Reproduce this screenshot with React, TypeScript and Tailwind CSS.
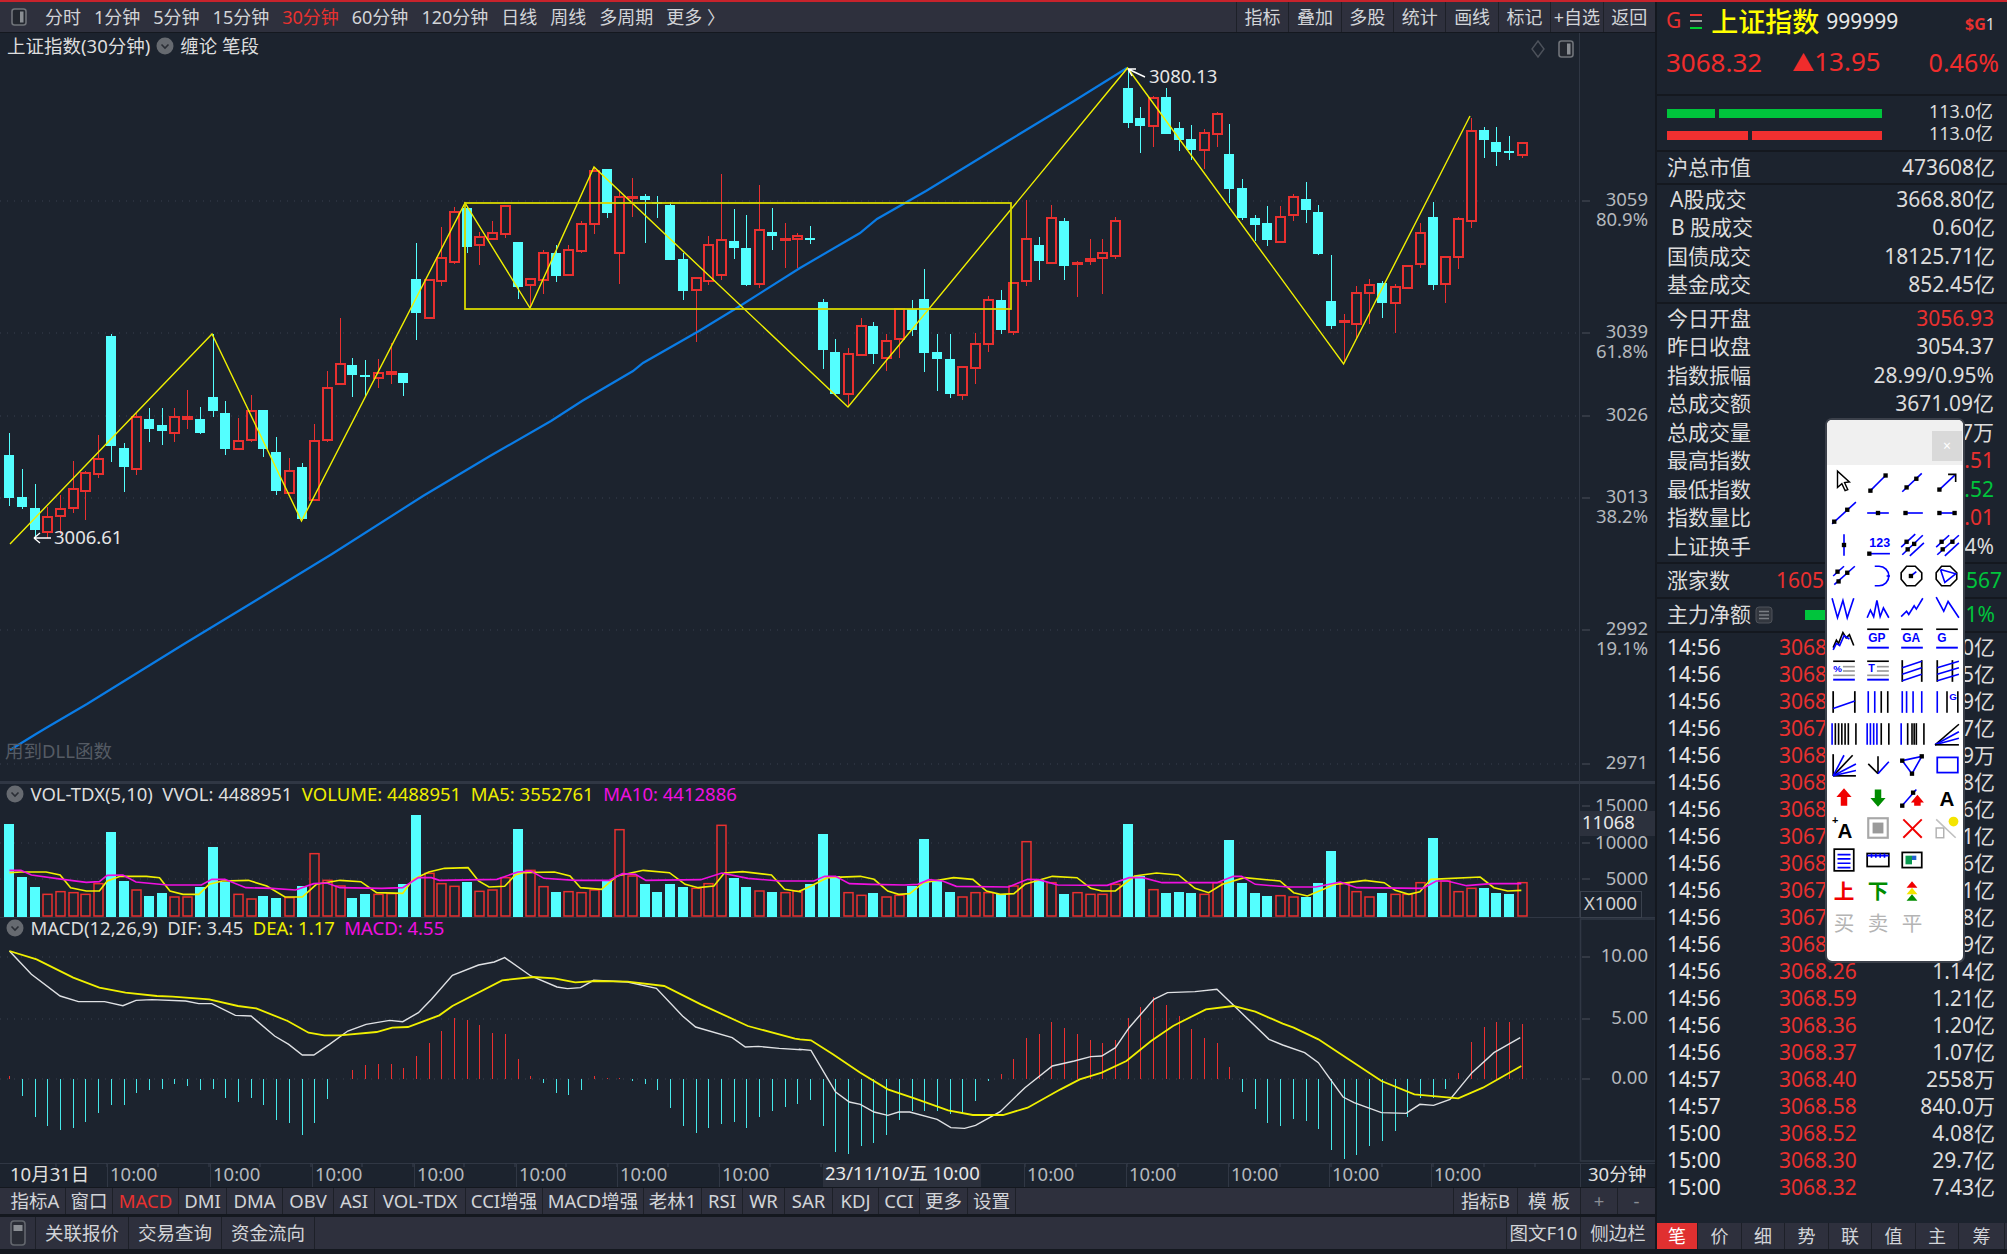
import type { ReactNode } from "react";

const CYAN = "#54ffff";
const RED = "#e9302f";
const YELLOW = "#f0f000";
const MAGENTA = "#f010e0";
const BG = "#1c232e";
const GRID = "#39414e";
const LINE = "#303744";
const AXIS = "#b4b8bd";

const barX = (i: number) => 9.2 + 12.71 * i;

// c = falling (filled), r = rising (hollow): wick top, body top, body bottom, wick bottom
const CANDLES: [string, number, number, number, number][] = [
  ["c", 432, 454, 497, 505], ["c", 468, 496, 506, 508], ["c", 483, 507, 529, 535], ["r", 506, 516, 531, 537],
  ["r", 494, 508, 515, 533], ["r", 460, 488, 507, 512], ["r", 470, 472, 490, 519], ["r", 434, 458, 473, 477],
  ["c", 333, 335, 445, 461], ["c", 442, 447, 466, 491], ["r", 412, 416, 468, 474], ["c", 407, 418, 428, 441],
  ["c", 407, 424, 430, 444], ["r", 407, 416, 432, 441], ["r", 389, 416, 418, 428], ["c", 406, 418, 432, 433],
  ["c", 333, 396, 410, 416], ["c", 400, 412, 448, 454], ["r", 417, 440, 448, 448], ["r", 394, 410, 439, 441],
  ["c", 409, 409, 448, 456], ["c", 436, 451, 490, 494], ["r", 457, 470, 492, 492], ["c", 462, 466, 518, 518],
  ["r", 423, 440, 499, 499], ["r", 370, 387, 439, 441], ["r", 317, 363, 383, 383], ["c", 357, 364, 374, 396],
  ["c", 359, 374, 376, 396], ["r", 358, 372, 377, 387], ["r", 342, 371, 373, 383], ["c", 372, 372, 382, 395],
  ["c", 242, 278, 312, 339], ["r", 279, 279, 317, 317], ["r", 226, 257, 280, 285], ["r", 206, 211, 261, 263],
  ["c", 206, 207, 246, 252], ["r", 231, 236, 244, 264], ["r", 220, 232, 238, 238], ["r", 204, 205, 233, 237],
  ["c", 241, 241, 286, 298], ["r", 278, 278, 284, 306], ["r", 249, 252, 279, 293], ["c", 244, 252, 275, 281],
  ["r", 244, 249, 274, 274], ["r", 220, 223, 250, 252], ["r", 166, 170, 223, 233], ["c", 168, 168, 212, 217],
  ["r", 190, 196, 252, 283], ["r", 177, 196, 197, 216], ["c", 193, 195, 199, 242], ["c", 195, 201, 203, 217],
  ["c", 201, 204, 259, 259], ["c", 252, 258, 290, 299], ["r", 277, 277, 289, 341], ["r", 235, 244, 280, 284],
  ["r", 173, 239, 274, 279], ["c", 208, 240, 247, 258], ["c", 214, 247, 284, 285], ["r", 184, 229, 283, 287],
  ["c", 207, 231, 235, 249], ["r", 222, 238, 239, 267], ["r", 232, 235, 238, 267], ["c", 225, 237, 239, 243],
  ["c", 298, 301, 349, 368], ["c", 338, 351, 393, 395], ["r", 347, 353, 393, 405], ["r", 317, 325, 354, 354],
  ["c", 321, 325, 353, 363], ["r", 333, 340, 357, 370], ["r", 308, 308, 338, 357], ["c", 299, 308, 329, 335],
  ["c", 268, 298, 352, 371], ["c", 333, 351, 358, 390], ["c", 333, 358, 393, 397], ["r", 365, 366, 394, 399],
  ["r", 332, 343, 367, 383], ["r", 295, 299, 343, 351], ["c", 289, 299, 329, 333], ["r", 282, 282, 331, 334],
  ["r", 199, 238, 280, 285], ["c", 236, 244, 260, 279], ["r", 204, 217, 262, 262], ["c", 217, 220, 265, 279],
  ["r", 260, 262, 263, 296], ["r", 238, 258, 260, 264], ["r", 238, 252, 257, 293], ["r", 216, 220, 255, 258],
  ["c", 67, 87, 122, 127], ["c", 106, 117, 125, 152], ["r", 95, 97, 125, 146], ["c", 87, 96, 133, 133],
  ["c", 121, 127, 139, 150], ["c", 124, 138, 149, 159], ["r", 128, 132, 149, 168], ["r", 111, 113, 133, 146],
  ["c", 123, 153, 188, 202], ["c", 178, 187, 217, 219], ["c", 214, 217, 224, 240], ["c", 205, 222, 239, 245],
  ["r", 205, 216, 241, 241], ["r", 193, 196, 214, 220], ["c", 181, 198, 209, 222], ["c", 204, 211, 253, 254],
  ["c", 254, 300, 325, 328], ["r", 313, 320, 321, 362], ["r", 285, 292, 323, 337], ["r", 278, 284, 292, 323],
  ["c", 280, 282, 302, 317], ["r", 283, 286, 302, 332], ["r", 265, 265, 287, 287], ["r", 222, 232, 263, 267],
  ["c", 201, 216, 284, 289], ["r", 255, 256, 283, 302], ["r", 216, 218, 256, 268], ["r", 117, 130, 220, 227],
  ["c", 126, 129, 139, 157], ["c", 126, 141, 151, 165], ["c", 135, 150, 152, 159], ["r", 141, 142, 154, 157],
];

const VOL_TOPS = [
  160, 317, 349, 370, 362, 365, 370, 338, 182, 330, 357, 375, 366, 378, 378, 348, 227, 333, 370, 384,
  375, 380, 380, 344, 248, 328, 345, 380, 370, 370, 368, 340, 133, 307, 338, 346, 332, 361, 357, 320,
  173, 298, 347, 362, 362, 365, 357, 327, 176, 315, 339, 362, 340, 348, 352, 338, 163, 321, 348, 360,
  362, 365, 360, 340, 190, 315, 365, 373, 366, 378, 373, 345, 205, 330, 362, 378, 365, 365, 370, 345,
  212, 328, 335, 370, 365, 370, 370, 340, 160, 315, 356, 366, 362, 366, 370, 335, 208, 335, 366, 375,
  374, 378, 378, 335, 240, 338, 362, 378, 366, 370, 370, 335, 200, 330, 362, 352, 352, 366, 370, 335,
];

const MACD_ENDS = [
  915, 975, 1037, 1065, 1078, 1070, 1052, 1025, 1002, 1002, 967, 957, 953, 940, 945, 957, 953, 980, 993, 980,
  1002, 1047, 1056, 1092, 1056, 985, 925, 897, 882, 880, 880, 892, 855, 816, 780, 740, 748, 762, 785, 790,
  865, 915, 935, 967, 972, 957, 915, 922, 922, 930, 940, 957, 1012, 1065, 1087, 1072, 1060, 1052, 1072, 1038,
  1020, 1007, 998, 988, 1065, 1142, 1150, 1125, 1115, 1092, 1047, 1020, 1020, 1020, 1030, 1030, 990, 930, 910, 865,
  802, 790, 753, 772, 790, 807, 817, 807, 740, 708, 678, 703, 735, 775, 802, 816, 888, 962, 1015, 1055,
  1065, 1045, 1050, 1075, 1138, 1163, 1152, 1125, 1110, 1080, 1038, 980, 980, 953, 905, 812, 767, 753, 753, 758,
];

const ZIGZAG = "10,543 212,333 301.5,520 465,202 530,307 594,166 848,406 1127.5,67 1343.6,363 1470,115";
const BLUE_LINE =
  "10,749 36,733 46,727 87,703 184,643 255,600 332,553 423,495 490,455 551,420 582,400 633,370 643,362 699,330 740,305 800,267 860,232 877,218 926,190 1008,140 1074,100 1127,67";

// traced from the crops: left half uses 1.912 px/unit, right half starts at x=800 with 1.823
const left = (pts: number[][]) => pts.map(([x, y]) => `${x / 1.912},${770 + y / 3}`).join(" ");
const right = (pts: number[][]) => pts.map(([x, y]) => `${800 + x / 1.823},${770 + y / 3}`).join(" ");

const MA5 =
  left([[18,305],[40,303],[88,303],[115,312],[135,350],[165,360],[190,360],[205,330],[230,316],[280,316],[305,320],[325,360],[350,370],[380,370],[400,340],[425,330],[475,328],[510,345],[545,378],[578,378],[605,340],[650,328],[690,332],[720,365],[770,367],[790,325],[820,303],[850,292],[895,290],[915,330],[935,348],[965,346],[985,312],[1000,305],[1060,303],[1090,315],[1110,350],[1150,355],[1180,315],[1230,298],[1280,305],[1310,340],[1335,350],[1365,345],[1385,306],[1420,302],[1475,312],[1500,355],[1530,362]]) +
  " " +
  right([[0,360],[20,345],[50,320],[110,316],[135,325],[160,360],[180,370],[200,368],[225,335],[280,320],[315,325],[340,360],[365,370],[390,368],[410,340],[460,316],[505,320],[530,352],[550,360],[575,360],[610,315],[650,306],[690,312],[720,352],[745,365],[770,340],[810,320],[875,330],[900,365],[925,375],[950,358],[975,340],[1030,328],[1065,335],[1085,358],[1110,370],[1130,362],[1150,325],[1240,318],[1265,350],[1290,360],[1315,358]]);

const MA10 =
  left([[18,298],[40,298],[60,312],[120,325],[165,334],[190,332],[205,313],[235,312],[260,333],[320,342],[385,342],[405,325],[430,325],[470,350],[520,352],[565,357],[600,338],[625,336],[650,350],[730,352],[770,350],[800,320],[825,320],[840,328],[950,325],[990,303],[1015,300],[1040,322],[1100,328],[1165,328],[1190,308],[1215,310],[1235,328],[1340,326],[1380,306],[1430,322],[1490,330],[1530,330]]) +
  " " +
  right([[0,330],[25,330],[45,316],[65,316],[90,338],[130,340],[190,342],[215,340],[235,326],[260,330],[285,346],[380,348],[415,325],[435,326],[470,342],[560,343],[600,320],[625,320],[660,335],[760,335],[790,316],[805,316],[830,340],[890,348],[940,348],[985,333],[1015,350],[1135,352],[1160,330],[1180,330],[1215,344],[1260,338],[1315,338]]);

const DIF =
  left([[18,540],[60,610],[115,675],[150,692],[200,692],[235,704],[260,688],[290,686],[355,690],[380,698],[405,698],[450,733],[480,735],[525,795],[552,820],[578,852],[600,852],[630,820],[665,780],[700,760],[745,748],[770,752],[800,725],[825,685],[865,613],[915,582],[945,573],[965,560],[1015,615],[1065,648],[1085,653],[1110,650],[1135,628],[1200,633],[1255,652],[1305,735],[1330,768],[1400,800],[1425,828],[1450,826],[1490,832],[1530,836]]) +
  " " +
  right([[0,835],[20,838],[65,963],[90,993],[110,1000],[135,1023],[160,1033],[180,1023],[200,1023],[250,1045],[275,1070],[300,1072],[320,1063],[365,1022],[410,950],[460,885],[500,870],[530,857],[550,855],[575,830],[600,770],[645,685],[670,665],[720,662],[760,655],[855,805],[880,822],[920,845],[945,875],[990,978],[1010,995],[1060,1025],[1105,1027],[1130,1000],[1155,1003],[1185,985],[1225,905],[1265,845],[1313,800]]);

const DEA =
  left([[18,540],[70,565],[140,620],[190,650],[240,665],[300,675],[330,677],[400,685],[455,705],[490,712],[550,750],[590,785],[620,793],[650,793],[720,783],[750,770],[780,768],[840,733],[865,705],[960,628],[1020,618],[1060,622],[1100,634],[1140,630],[1200,632],[1270,645],[1340,700],[1430,765],[1520,803]]) +
  " " +
  right([[0,805],[20,808],[60,850],[110,905],[160,955],[210,983],[270,1018],[315,1032],[370,1032],[415,1010],[475,955],[510,925],[550,905],[595,870],[640,810],[680,765],[740,715],[790,705],[830,722],[880,758],[900,770],[945,805],[1000,865],[1060,930],[1120,970],[1200,982],[1245,950],[1315,885]]);

const PERIODS = ["分时", "1分钟", "5分钟", "15分钟", "30分钟", "60分钟", "120分钟", "日线", "周线", "多周期", "更多 〉"];
const TOOLS = ["指标", "叠加", "多股", "统计", "画线", "标记", "+自选", "返回"];

const TABS = [
  { label: "指标A", w: "w-[61px]" }, { label: "窗口", w: "w-[47px]" }, { label: "MACD", w: "w-[66px]", active: true },
  { label: "DMI", w: "w-[48px]" }, { label: "DMA", w: "w-[56px]" }, { label: "OBV", w: "w-[51px]" },
  { label: "ASI", w: "w-[41px]" }, { label: "VOL-TDX", w: "w-[91px]" }, { label: "CCI增强", w: "w-[77px]" },
  { label: "MACD增强", w: "w-[101px]" }, { label: "老林1", w: "w-[58px]" }, { label: "RSI", w: "w-[41px]" },
  { label: "WR", w: "w-[42px]" }, { label: "SAR", w: "w-[48px]" }, { label: "KDJ", w: "w-[46px]" },
  { label: "CCI", w: "w-[41px]" }, { label: "更多", w: "w-[48px]" }, { label: "设置", w: "w-[48px]" },
];

const TICKS: [string, string, string][] = [
  ["14:56", "3068.12", "1.10亿"], ["14:56", "3068.20", "1.25亿"], ["14:56", "3068.05", "1.19亿"], ["14:56", "3067.96", "1.07亿"],
  ["14:56", "3068.01", "9609万"], ["14:56", "3068.15", "1.18亿"], ["14:56", "3068.09", "1.16亿"], ["14:56", "3067.98", "1.21亿"],
  ["14:56", "3068.03", "1.06亿"], ["14:56", "3067.95", "1.11亿"], ["14:56", "3067.99", "1.08亿"], ["14:56", "3068.10", "1.09亿"],
  ["14:56", "3068.26", "1.14亿"], ["14:56", "3068.59", "1.21亿"], ["14:56", "3068.36", "1.20亿"], ["14:56", "3068.37", "1.07亿"],
  ["14:57", "3068.40", "2558万"], ["14:57", "3068.58", "840.0万"], ["15:00", "3068.52", "4.08亿"], ["15:00", "3068.30", "29.7亿"],
  ["15:00", "3068.32", "7.43亿"],
];

const BOTTOM_TABS = [
  { label: "笔", w: "w-[41px]" }, { label: "价", w: "w-[44px]" }, { label: "细", w: "w-[43px]" }, { label: "势", w: "w-[44px]" },
  { label: "联", w: "w-[43px]" }, { label: "值", w: "w-[44px]" }, { label: "主", w: "w-[43px]" }, { label: "筹", w: "w-[46px]" },
];

function CircleCaret() {
  return (
    <svg width="18" height="18" viewBox="0 0 18 18" className="shrink-0">
      <circle cx="9" cy="9" r="8.5" fill="#666a70" />
      <path d="M5.5 7.5 L9 11 L12.5 7.5" fill="none" stroke="#2a2e35" strokeWidth="1.6" />
    </svg>
  );
}

function PanelToggle() {
  return (
    <svg width="16" height="18" viewBox="0 0 16 18">
      <rect x="1" y="1" width="14" height="16" rx="2.5" fill="#23272f" stroke="#70747a" strokeWidth="1.6" />
      <rect x="9" y="3.5" width="3.5" height="11" fill="#8a8e93" />
    </svg>
  );
}

function GridDots({ ys }: { ys: number[] }) {
  return (
    <>
      {ys.map((y) => (
        <line key={y} x1="0" x2="1578" y1={y} y2={y} stroke={GRID} strokeDasharray="1 6" />
      ))}
    </>
  );
}

function AxisTick({ y }: { y: number }) {
  return <line x1="1582" x2="1590" y1={y} y2={y} stroke="#4a505a" />;
}

function AxisLabel({ y, children }: { y: number; children: ReactNode }) {
  return (
    <text x="1648" y={y - 1.5} textAnchor="end" dominantBaseline="central" fill={AXIS} fontSize="18.5">
      {children}
    </text>
  );
}

function Candles() {
  return (
    <g shapeRendering="crispEdges">
      {CANDLES.map(([kind, wickTop, bodyTop, bodyBottom, wickBottom], i) => {
        const x = Math.round(barX(i));
        if (kind === "c") {
          return (
            <g key={i}>
              <line x1={x + 0.5} x2={x + 0.5} y1={wickTop} y2={wickBottom} stroke={CYAN} />
              <rect x={x - 5} y={bodyTop} width="10" height={bodyBottom - bodyTop} fill={CYAN} />
            </g>
          );
        }
        return (
          <g key={i}>
            <line x1={x + 0.5} x2={x + 0.5} y1={wickTop} y2={bodyTop} stroke={RED} />
            <line x1={x + 0.5} x2={x + 0.5} y1={bodyBottom} y2={wickBottom} stroke={RED} />
            <rect x={x - 4} y={bodyTop} width="9" height={bodyBottom - bodyTop} fill={BG} stroke={RED} strokeWidth="2" />
          </g>
        );
      })}
    </g>
  );
}

function MainChart() {
  return (
    <div className="relative h-[748px]">
      <svg width="1656" height="748" viewBox="0 32 1656 748" className="block">
        <GridDots ys={[200, 332, 415, 497, 629, 763]} />
        <line x1="1579.5" x2="1579.5" y1="32" y2="780" stroke={LINE} />
        <Candles />
        <polyline points={BLUE_LINE} fill="none" stroke="#0a7ce6" strokeWidth="2.2" />
        <polyline points={ZIGZAG} fill="none" stroke={YELLOW} strokeWidth="1.4" />
        <rect x="465" y="202" width="546" height="106" fill="none" stroke="#d8d800" strokeWidth="1.8" />
        <path d="M1145 76 L1128 68 M1128 68 L1136 68 M1128 68 L1132 75" fill="none" stroke="#fff" strokeWidth="1.4" />
        <text x="1149" y="74" dominantBaseline="central" fill="#e6e6e6" fontSize="18.5">3080.13</text>
        <path d="M51 537 L34 537 M34 537 L40 532 M34 537 L40 542" fill="none" stroke="#fff" strokeWidth="1.4" />
        <text x="54" y="535" dominantBaseline="central" fill="#e6e6e6" fontSize="18.5">3006.61</text>
        <text x="5" y="749" dominantBaseline="central" fill="#555b64" fontSize="18.5">用到DLL函数</text>

        <path d="M1538 40 L1544 48 L1538 56 L1532 48 Z" fill="none" stroke="#4d525b" strokeWidth="1.4" />

        {[200, 332, 415, 497, 629, 763].map((y) => (
          <AxisTick key={y} y={y} />
        ))}
        <AxisLabel y={199}>3059</AxisLabel>
        <AxisLabel y={219}>80.9%</AxisLabel>
        <AxisLabel y={331}>3039</AxisLabel>
        <AxisLabel y={351}>61.8%</AxisLabel>
        <AxisLabel y={414}>3026</AxisLabel>
        <AxisLabel y={496}>3013</AxisLabel>
        <AxisLabel y={516}>38.2%</AxisLabel>
        <AxisLabel y={628}>2992</AxisLabel>
        <AxisLabel y={648}>19.1%</AxisLabel>
        <AxisLabel y={762}>2971</AxisLabel>
      </svg>

      <div className="absolute left-[7px] top-[2px] flex items-center gap-[6px] text-[18.5px] leading-[22px] text-[#dedede]">
        <span>上证指数(30分钟)</span>
        <CircleCaret />
        <span>缠论 笔段</span>
      </div>
      <div className="absolute left-[1558px] top-[7px]">
        <PanelToggle />
      </div>
    </div>
  );
}

function VolumeChart() {
  return (
    <div className="relative h-[137px] border-t-[3px] border-[#303744]">
      <svg width="1656" height="134" viewBox="0 783 1656 134" className="block">
        <GridDots ys={[842, 878]} />
        <line x1="1579.5" x2="1579.5" y1="783" y2="917" stroke={LINE} />
        {VOL_TOPS.map((top, i) => {
          const x = Math.round(barX(i));
          const y = 770 + top / 3;
          return CANDLES[i][0] === "c" ? (
            <rect key={i} x={x - 5} y={y} width="10" height={916 - y} fill={CYAN} shapeRendering="crispEdges" />
          ) : (
            <rect key={i} x={x - 4} y={y} width="9" height={915 - y} fill={BG} stroke={RED} strokeWidth="1.5" />
          );
        })}
        <polyline points={MA5} fill="none" stroke={YELLOW} strokeWidth="1.6" />
        <polyline points={MA10} fill="none" stroke={MAGENTA} strokeWidth="1.6" />
        <line x1="0" x2="1656" y1="916.5" y2="916.5" stroke={LINE} />
        <AxisTick y={805} />
        <AxisTick y={842} />
        <AxisTick y={878} />
        <AxisLabel y={805}>15000</AxisLabel>
        <AxisLabel y={842}>10000</AxisLabel>
        <AxisLabel y={878}>5000</AxisLabel>
        <rect x="1580" y="810" width="75" height="25" fill="#2c313d" />
        <text x="1582" y="820.5" dominantBaseline="central" fill="#e8e8e8" fontSize="18.5">11068</text>
        <rect x="1580.5" y="890.5" width="61" height="26" fill={BG} stroke="#3a414d" />
        <text x="1584" y="901.5" dominantBaseline="central" fill="#d0d0d0" fontSize="18.5">X1000</text>
      </svg>
      <div className="absolute left-[6px] top-0 flex items-center gap-[9.5px] text-[18.5px] leading-[20px] text-[#dedede] whitespace-nowrap">
        <CircleCaret />
        <span className="-ml-[3px]">VOL-TDX(5,10)</span>
        <span>VVOL: 4488951</span>
        <span className="text-[#eeee00]">VOLUME: 4488951</span>
        <span className="text-[#eeee00]">MA5: 3552761</span>
        <span className="text-[#f010e0]">MA10: 4412886</span>
      </div>
    </div>
  );
}

function MacdChart() {
  return (
    <div className="relative h-[245px]">
      <svg width="1656" height="245" viewBox="0 917 1656 245" className="block">
        <GridDots ys={[956, 1018, 1078]} />
        <g shapeRendering="crispEdges">
          {MACD_ENDS.map((end, i) => {
            const y = 770 + end / 3;
            const x = Math.round(barX(i)) + 0.5;
            return <line key={i} x1={x} x2={x} y1="1078" y2={y} stroke={y < 1078 ? RED : "#45e8ea"} />;
          })}
        </g>
        <polyline points={DIF} fill="none" stroke="#dfe1e4" strokeWidth="1.4" />
        <polyline points={DEA} fill="none" stroke={YELLOW} strokeWidth="1.8" />
        <rect x="1580.5" y="918" width="75" height="242" fill="none" stroke={LINE} strokeWidth="1.6" />
        <AxisTick y={956} />
        <AxisTick y={1018} />
        <AxisTick y={1078} />
        <AxisLabel y={955}>10.00</AxisLabel>
        <AxisLabel y={1017}>5.00</AxisLabel>
        <AxisLabel y={1077}>0.00</AxisLabel>
      </svg>
      <div className="absolute left-[6px] top-0 flex items-center gap-[9.5px] text-[18.5px] leading-[20px] text-[#dedede] whitespace-nowrap">
        <CircleCaret />
        <span className="-ml-[3px]">MACD(12,26,9)</span>
        <span>DIF: 3.45</span>
        <span className="text-[#eeee00]">DEA: 1.17</span>
        <span className="text-[#f010e0]">MACD: 4.55</span>
      </div>
    </div>
  );
}

function TimeAxis() {
  const stops = [107, 210, 312, 414, 516, 617, 719, 1024, 1126, 1228, 1329, 1431];
  return (
    <svg width="1656" height="24" viewBox="0 1162 1656 24" className="block">
      <line x1="0" x2="1656" y1="1162.5" y2="1162.5" stroke={LINE} />
      {Array.from({ length: 30 }, (_, i) => (
        <line key={i} x1={56 + i * 51} x2={56 + i * 51} y1="1162" y2="1166" stroke={GRID} />
      ))}
      <text x="10" y="1172.5" dominantBaseline="central" fill="#e0e0e0" fontSize="18.5">10月31日</text>
      {stops.map((x) => (
        <g key={x}>
          <line x1={x + 0.5} x2={x + 0.5} y1="1162" y2="1186" stroke={LINE} />
          <text x={x + 3} y="1172.5" dominantBaseline="central" fill={AXIS} fontSize="18.5">10:00</text>
        </g>
      ))}
      <rect x="823" y="1162" width="158" height="24" fill="#2c313d" />
      <text x="825" y="1171.5" dominantBaseline="central" fill="#e8e8e8" fontSize="18.5">23/11/10/五 10:00</text>
      <line x1="1580.5" x2="1580.5" y1="1162" y2="1186" stroke={LINE} />
      <text x="1588" y="1172.5" dominantBaseline="central" fill="#e0e0e0" fontSize="18.5">30分钟</text>
    </svg>
  );
}

function TopBar() {
  return (
    <div className="flex h-[31px] items-center bg-[#2e303d] border-b border-[#14181f] text-[18px] text-[#d2d4d8]">
      <div className="ml-[11px] mr-[18px] flex">
        <PanelToggle />
      </div>
      <div className="flex gap-[13px] whitespace-nowrap">
        {PERIODS.map((p) => (
          <span key={p} className={p === "30分钟" ? "text-[#e9302f]" : ""}>
            {p}
          </span>
        ))}
      </div>
      <div className="ml-auto flex h-full whitespace-nowrap">
        {TOOLS.map((t) => (
          <span key={t} className="flex w-[52.4px] items-center justify-center border-l border-[#1d2028]">
            {t}
          </span>
        ))}
      </div>
    </div>
  );
}

function IndicatorTabs() {
  return (
    <div className="mt-[1px] flex h-[26px] items-center bg-[#2e303d] text-[18.5px] text-[#d2d4d8] whitespace-nowrap">
      <div className="w-[5px]" />
      {TABS.map((t) => (
        <span
          key={t.label}
          className={`flex h-full items-center justify-center border-r border-[#1d2028] ${t.w} ${t.active ? "text-[#e9302f]" : ""}`}
        >
          {t.label}
        </span>
      ))}
      <div className="ml-auto flex h-full">
        <span className="flex w-[64px] items-center justify-center border-l border-[#1d2028]">指标B</span>
        <span className="flex w-[63px] items-center justify-center border-l border-[#1d2028]">模 板</span>
        <span className="flex w-[37px] items-center justify-center border-l border-[#1d2028] text-[#8a8e95]">+</span>
        <span className="flex w-[38px] items-center justify-center border-l border-[#1d2028] text-[#8a8e95]">-</span>
      </div>
    </div>
  );
}

function BottomBar() {
  return (
    <div className="mt-[3px] flex h-[32px] items-center bg-[#2e303d] text-[18.5px] text-[#d2d4d8] whitespace-nowrap">
      <span className="flex h-full w-[36px] items-center justify-center border-r border-[#1d2028]">
        <svg width="16" height="26" viewBox="0 0 16 26">
          <rect x="1" y="1" width="14" height="24" rx="3" fill="#2a2d36" stroke="#63676e" strokeWidth="1.6" />
          <rect x="3.5" y="5" width="9" height="6" fill="#8a8e93" />
        </svg>
      </span>
      {["关联报价", "交易查询", "资金流向"].map((t) => (
        <span key={t} className="flex h-full w-[93px] items-center justify-center border-r border-[#1d2028]">
          {t}
        </span>
      ))}
      <div className="ml-auto flex h-full">
        <span className="flex w-[74px] items-center justify-center border-l border-[#1d2028]">图文F10</span>
        <span className="flex w-[75px] items-center justify-center border-l border-[#1d2028]">侧边栏</span>
      </div>
    </div>
  );
}

function InfoRow({ label, value, tone, indent }: { label: string; value: string; tone?: string; indent?: string }) {
  return (
    <div className="flex h-[28.5px] items-center justify-between">
      <span className={indent}>{label}</span>
      <span className={tone}>{value}</span>
    </div>
  );
}

function SidePanel() {
  return (
    <div className="relative flex flex-1 flex-col border-l-2 border-[#14181f] text-[21px] text-[#dcdcdc] whitespace-nowrap">
      {/* quote header */}
      <div className="h-[94px] border-b-2 border-[#14181f] px-[8px] pt-[1px]">
        <div className="flex h-[36px] items-center">
          <span className="ml-[1px] text-[21px] text-[#e9302f]">G</span>
          <span className="ml-[9px] flex h-[15px] w-[12px] flex-col justify-between">
            <i className="h-[2px] bg-[#e9302f]" />
            <i className="h-[2px] bg-[#9a9a9a]" />
            <i className="h-[2px] bg-[#00d030]" />
          </span>
          <span className="ml-[9px] text-[27px] leading-none font-medium text-[#ffff00]">上证指数</span>
          <span className="ml-[7px] text-[21px] leading-none text-[#e8e8e8]">999999</span>
          <span className="ml-auto mr-[4px] mt-[6px] text-[16px]">
            <b className="text-[#e9302f]">$G</b>1
          </span>
        </div>
        <div className="mt-[5px] flex items-center text-[26px] leading-[34px] text-[#f02c2c]">
          <span className="ml-[1px]">3068.32</span>
          <span className="ml-[30px] flex items-baseline">
            <span className="text-[22px]">▲</span>13.95
          </span>
          <span className="ml-auto text-[25px]">0.46%</span>
        </div>
      </div>

      {/* volume bars */}
      <div className="h-[56px] border-b-2 border-[#14181f] pl-[10px] pr-[14px] text-[18px]">
        <div className="mt-[4px] flex h-[22px] items-center justify-between">
          <div className="mt-[5px] flex gap-[4px]">
            <i className="h-[9px] w-[48px] bg-[#00c43c]" />
            <i className="h-[9px] w-[163px] bg-[#00c43c]" />
          </div>
          <span>113.0亿</span>
        </div>
        <div className="flex h-[22px] items-center justify-between">
          <div className="mt-[5px] flex gap-[4px]">
            <i className="h-[9px] w-[81px] bg-[#f03030]" />
            <i className="h-[9px] w-[130px] bg-[#f03030]" />
          </div>
          <span>113.0亿</span>
        </div>
      </div>

      <div className="flex h-[33px] items-center justify-between border-b-2 border-[#14181f] pl-[10px] pr-[12px]">
        <span>沪总市值</span>
        <span>473608亿</span>
      </div>

      <div className="h-[119px] border-b-2 border-[#14181f] pl-[10px] pr-[12px]">
        <InfoRow label="A股成交" indent="pl-[3px]" value="3668.80亿" />
        <InfoRow label="B 股成交" indent="pl-[4px]" value="0.60亿" />
        <InfoRow label="国债成交" value="18125.71亿" />
        <InfoRow label="基金成交" value="852.45亿" />
      </div>

      <div className="h-[260px] border-b-2 border-[#14181f] pl-[10px] pr-[13px]">
        <InfoRow label="今日开盘" value="3056.93" tone="text-[#e9302f]" />
        <InfoRow label="昨日收盘" value="3054.37" />
        <InfoRow label="指数振幅" value="28.99/0.95%" />
        <InfoRow label="总成交额" value="3671.09亿" />
        <InfoRow label="总成交量" value="3012607万" />
        <InfoRow label="最高指数" value="3070.51" tone="text-[#e9302f]" />
        <InfoRow label="最低指数" value="3041.52" tone="text-[#00c43c]" />
        <InfoRow label="指数量比" value="1.01" tone="text-[#e9302f]" />
        <InfoRow label="上证换手" value="0.84%" />
      </div>

      <div className="flex h-[35px] items-center border-b-2 border-[#14181f] pl-[10px] pr-[5px]">
        <span>涨家数</span>
        <span className="ml-[46px] text-[#e9302f]">1605</span>
        <span className="ml-auto text-[#00c43c]">567</span>
      </div>

      <div className="flex h-[34px] items-center border-b-2 border-[#14181f] pl-[10px] pr-[12px]">
        <span>主力净额</span>
        <svg width="18" height="18" viewBox="0 0 18 18" className="ml-[4px]">
          <rect x="1" y="1" width="16" height="16" rx="3" fill="#33373f" stroke="#4f535a" />
          <path d="M4 5.5h10M4 9h10M4 12.5h10" stroke="#7a7e84" strokeWidth="1.6" />
        </svg>
        <i className="ml-[32px] h-[10px] w-[30px] bg-[#00c43c]" />
        <span className="ml-auto text-[#00c43c]">-0.51%</span>
      </div>

      {/* tick list */}
      <div className="-mt-[1px] pl-[10px] pr-[12px]">
        {TICKS.map(([time, price, amount], i) => (
          <div key={i} className="grid h-[27px] grid-cols-[112px_1fr_auto] items-center">
            <span className="text-[#e6e6e6]">{time}</span>
            <span className="text-[#e9302f]">{price}</span>
            <span>{amount}</span>
          </div>
        ))}
      </div>

      <div className="mt-auto flex h-[26px] bg-[#2e303d] text-[18px] text-[#d2d4d8]">
        {BOTTOM_TABS.map((t, i) => (
          <span
            key={t.label}
            className={`flex items-center justify-center border-r border-[#1d2028] ${t.w} ${i === 0 ? "bg-[#e03030] text-white" : ""}`}
          >
            {t.label}
          </span>
        ))}
      </div>

      <DrawingTools />
    </div>
  );
}

const BLUE = "#0000ff";
const seg = (x1: number, y1: number, x2: number, y2: number, c = BLUE, w = 1.5) => (
  <line x1={x1} y1={y1} x2={x2} y2={y2} stroke={c} strokeWidth={w} />
);
const dot = (x: number, y: number) => <rect x={x - 2} y={y - 2} width="4" height="4" fill="#000" />;
const wave = (points: string, c = BLUE) => <polyline points={points} fill="none" stroke={c} strokeWidth="1.5" />;
const label = (x: number, y: number, t: string, c = BLUE, size = 10) => (
  <text x={x} y={y} fill={c} fontSize={size} fontWeight="700" fontFamily="Liberation Sans, sans-serif">
    {t}
  </text>
);
const bars = (xs: number[], blue: number[]) => (
  <>
    {xs.map((x, i) => (
      <line key={i} x1={x} x2={x} y1="2" y2="22" stroke={blue.includes(i) ? BLUE : "#000"} strokeWidth="1.5" />
    ))}
  </>
);

const ICONS: ReactNode[] = [
  <path d="M6 2 L6 17 L10 13.5 L13 20 L15.5 19 L12.5 12.5 L17 12 Z" fill="#fff" stroke="#000" strokeWidth="1.3" />,
  <>{seg(5, 20, 19, 6)}{dot(5, 20)}{dot(19, 6)}</>,
  <>{seg(3, 21, 21, 4)}{dot(7, 17)}{dot(16, 9)}</>,
  <>{seg(5, 19, 20, 5)}{dot(5, 19)}<polyline points="13,5 20,5 20,12" fill="none" stroke="#000" strokeWidth="1.5" /></>,
  <>{seg(1, 22, 23, 2)}{dot(3, 20)}{dot(15, 9)}</>,
  <>{seg(2, 12, 22, 12)}{dot(12, 12)}</>,
  <>{seg(5, 12, 22, 12)}{dot(6, 12)}</>,
  <>{seg(4, 12, 20, 12)}{dot(5, 12)}{dot(19, 12)}</>,
  <>{seg(12, 2, 12, 22)}{dot(12, 12)}</>,
  <>{label(4, 14, "123", BLUE, 11.5)}{seg(4, 20, 23, 20)}{dot(4, 20)}</>,
  <>{seg(2, 14, 15, 2)}{seg(3, 21, 22, 3)}{seg(10, 22, 23, 10)}{dot(7, 9)}{dot(14, 11)}{dot(8, 16)}</>,
  <>{seg(2, 14, 14, 3)}{seg(3, 21, 23, 3)}{seg(10, 22, 23, 10)}{dot(7, 9)}{dot(17, 9)}{dot(8, 16)}</>,
  <>{seg(2, 12, 12, 3)}{seg(3, 20, 22, 3)}{dot(6, 8)}{dot(7, 17)}{dot(15, 9)}</>,
  <>
    <path d="M9 3 H13 A9 9 0 0 1 13 21 H9" fill="none" stroke={BLUE} strokeWidth="1.5" />
    {seg(20, 12, 23, 12)}
  </>,
  <>
    <path d="M7 3 H15 L21 9 V15 L15 21 H7 L2 15 V9 Z" fill="none" stroke="#000" strokeWidth="1.5" />
    {seg(11, 12, 16, 8)}
    {dot(11, 12)}
  </>,
  <>
    <path d="M7 3 H15 L21 9 V15 L15 21 H7 L2 15 V9 Z" fill="none" stroke="#000" strokeWidth="1.5" />
    {wave("6,6 20,10 10,18 6,6")}
  </>,
  wave("1,3 6,21 11,5 15,21 21,3"),
  wave("2,21 5,14 8,20 11,5 14,20 17,12 22,21"),
  wave("2,20 7,15 9,18 14,10 16,13 22,3"),
  wave("2,2 9,15 13,6 23,21"),
  <>{wave("2,20 5,13 7,16 11,6 14,11 17,8 21,18", "#000")}{wave("2,22 5,16 8,18 12,9 17,12")}</>,
  <>{seg(2, 3, 22, 3, "#000")}{label(3, 15, "GP", BLUE, 11)}{seg(2, 20, 22, 20, BLUE, 1.8)}</>,
  <>{seg(2, 3, 22, 3, "#000")}{label(3, 15, "GA", BLUE, 11)}{seg(2, 20, 22, 20, BLUE, 1.8)}</>,
  <>{seg(2, 3, 22, 3, "#000")}{label(3, 15, "G", BLUE, 11)}{seg(2, 20, 22, 20, BLUE, 1.8)}</>,
  <>{seg(2, 3, 22, 3, "#000")}{label(2, 13, "%", BLUE, 9)}{seg(11, 8, 22, 8, "#999")}{seg(11, 12, 22, 12, "#999")}{seg(2, 16, 22, 16, "#999")}{seg(2, 20, 22, 20, BLUE, 1.8)}</>,
  <>{seg(2, 3, 22, 3, "#000")}{label(3, 13, "T", BLUE, 10)}{seg(11, 8, 22, 8, "#999")}{seg(11, 12, 22, 12, "#999")}{seg(2, 16, 22, 16, "#999")}{seg(2, 20, 22, 20, BLUE, 1.8)}</>,
  <>{seg(3, 2, 3, 22, "#000", 1.6)}{seg(21, 2, 21, 22, "#000", 1.6)}{seg(3, 9, 21, 3)}{seg(3, 15, 21, 9)}{seg(3, 21, 21, 15)}</>,
  <>{seg(3, 2, 3, 22, "#000", 1.6)}{seg(17, 2, 17, 22, "#000", 1.6)}{seg(3, 9, 23, 3)}{seg(3, 15, 23, 9)}{seg(3, 21, 23, 15)}</>,
  <>{seg(2, 2, 2, 22, "#000", 1.6)}{seg(22, 2, 22, 22, "#000", 1.6)}{seg(2, 18, 22, 11)}</>,
  bars([3, 9, 15, 21], [0, 1]),
  bars([3, 7, 13, 21], [0, 1, 2, 3]),
  <>{bars([3, 12, 22], [0])}{label(14, 10, "G", BLUE, 9)}</>,
  bars([1, 4, 7, 10, 13, 16, 23], [0]),
  bars([2, 5, 8, 11, 15, 22], [0, 1, 2, 3]),
  bars([2, 8, 12, 14, 16, 23], [0]),
  <>{seg(1, 22, 23, 3, "#000")}{seg(1, 22, 23, 10)}{seg(1, 22, 23, 16)}{seg(1, 22, 23, 22, "#000")}</>,
  <>{seg(2, 2, 2, 22, "#000", 1.6)}{seg(2, 22, 23, 22, "#000", 1.6)}{seg(2, 22, 20, 3, "#000")}{seg(2, 22, 12, 3)}{seg(2, 22, 23, 11)}{seg(2, 22, 23, 17)}</>,
  <>{seg(12, 4, 12, 20, "#000")}{seg(3, 11, 12, 20, "#000")}{seg(22, 9, 12, 20)}</>,
  <>{wave("3,8 21,4 12,20 3,8")}{dot(3, 8)}{dot(21, 4)}{dot(12, 20)}</>,
  <rect x="3" y="5" width="19" height="14" fill="none" stroke={BLUE} strokeWidth="1.6" />,
  <path d="M12 4 L19 12 H15 V20 H9 V12 H5 Z" fill="#f00000" />,
  <path d="M12 21 L19 13 H15 V5 H9 V13 H5 Z" fill="#008c00" />,
  <>{seg(2, 21, 16, 5)}{dot(3, 20)}{dot(13, 8)}<path d="M17 10 L23 17 H20 V20 H14 V17 H11 Z" fill="#f00000" /></>,
  <text x="5" y="20" fontSize="19" fontWeight="700" fontFamily="Liberation Sans, sans-serif" fill="#000">A</text>,
  <>{label(1, 8, "+", "#000", 10)}<text x="6" y="21" fontSize="19" fontWeight="700" fontFamily="Liberation Sans, sans-serif" fill="#000">A</text></>,
  <>
    <rect x="3" y="3" width="18" height="18" fill="#fff" stroke="#a8a8a8" strokeWidth="2" />
    <rect x="7" y="7" width="10" height="10" fill="#9a9a9a" />
  </>,
  <>{seg(4, 4, 21, 21, "#f00000", 1.8)}{seg(21, 4, 4, 21, "#f00000", 1.8)}</>,
  <>
    <rect x="2" y="12" width="7" height="9" fill="#fff" stroke="#b0b0b0" strokeWidth="1.3" />
    {seg(2, 4, 20, 21, "#c0c0c0")}
    <circle cx="18" cy="6" r="4.5" fill="#f4e400" />
  </>,
  <>
    <rect x="3" y="2" width="18" height="20" fill="#fff" stroke="#000" strokeWidth="1.6" />
    {seg(6, 7, 18, 7)}{seg(6, 11, 18, 11)}{seg(6, 15, 18, 15)}{seg(6, 19, 18, 19)}
  </>,
  <>
    <rect x="2" y="6" width="20" height="12" fill="#fff" stroke="#000" strokeWidth="1.6" />
    {seg(2, 8, 22, 8)}
    {seg(6, 6, 6, 10)}{seg(10, 6, 10, 10)}{seg(14, 6, 14, 10)}{seg(18, 6, 18, 10)}
  </>,
  <>
    <rect x="3" y="5" width="18" height="14" fill="#fff" stroke="#000" strokeWidth="1.6" />
    <rect x="6" y="8" width="6" height="8" fill="#0a9a50" />
    <rect x="12" y="8" width="4" height="4" fill="#2060d0" />
  </>,
  null,
  <text x="2.5" y="19" fontSize="19" fill="#f00000" fontWeight="700">上</text>,
  <text x="2.5" y="19" fontSize="19" fill="#008c00" fontWeight="700">下</text>,
  <>
    <path d="M12 3 L17 9 H7 Z" fill="#f00000" />
    <path d="M12 9 L17 15 H7 Z" fill="#f4e400" />
    <path d="M12 15 L17 21 H7 Z" fill="#008c00" />
  </>,
  null,
  <text x="2.5" y="19" fontSize="19" fill="#b4b4b4">买</text>,
  <text x="2.5" y="19" fontSize="19" fill="#b4b4b4">卖</text>,
  <text x="2.5" y="19" fontSize="19" fill="#b4b4b4">平</text>,
  null,
];

function DrawingTools() {
  return (
    <div className="absolute left-[168px] top-[416px] flex h-[545px] w-[140px] flex-col overflow-hidden rounded-[7px] border-2 border-[#3c414b] bg-white">
      <div className="flex h-[45px] justify-end bg-[#f0f0f0] pr-[1px] pt-[11px]">
        <span className="flex h-[30px] w-[30px] items-center justify-center bg-[#d9d9d9] text-[14px] leading-none text-white">×</span>
      </div>
      <div className="grid grid-cols-[repeat(4,34.2px)] auto-rows-[31.5px] pt-[1px]">
        {ICONS.map((icon, i) => (
          <div key={i} className="flex items-center justify-center">
            {icon && (
              <svg width="26" height="26" viewBox="0 0 24 24">
                {icon}
              </svg>
            )}
          </div>
        ))}
      </div>
    </div>
  );
}

export default function App() {
  return (
    <div className="flex h-[1254px] w-[2007px] flex-col overflow-hidden bg-[#14181f] font-['Noto_Sans','Noto_Sans_CJK_SC',sans-serif]">
      <div className="h-[2px] shrink-0 bg-[#c8232c]" />
      <div className="flex h-[1247px] bg-[#1c232e]">
        <div className="w-[1655px] shrink-0 bg-[#14181f]">
          <TopBar />
          <div className="bg-[#1c232e]">
            <MainChart />
            <VolumeChart />
            <MacdChart />
            <TimeAxis />
          </div>
          <IndicatorTabs />
          <BottomBar />
        </div>
        <SidePanel />
      </div>
    </div>
  );
}
